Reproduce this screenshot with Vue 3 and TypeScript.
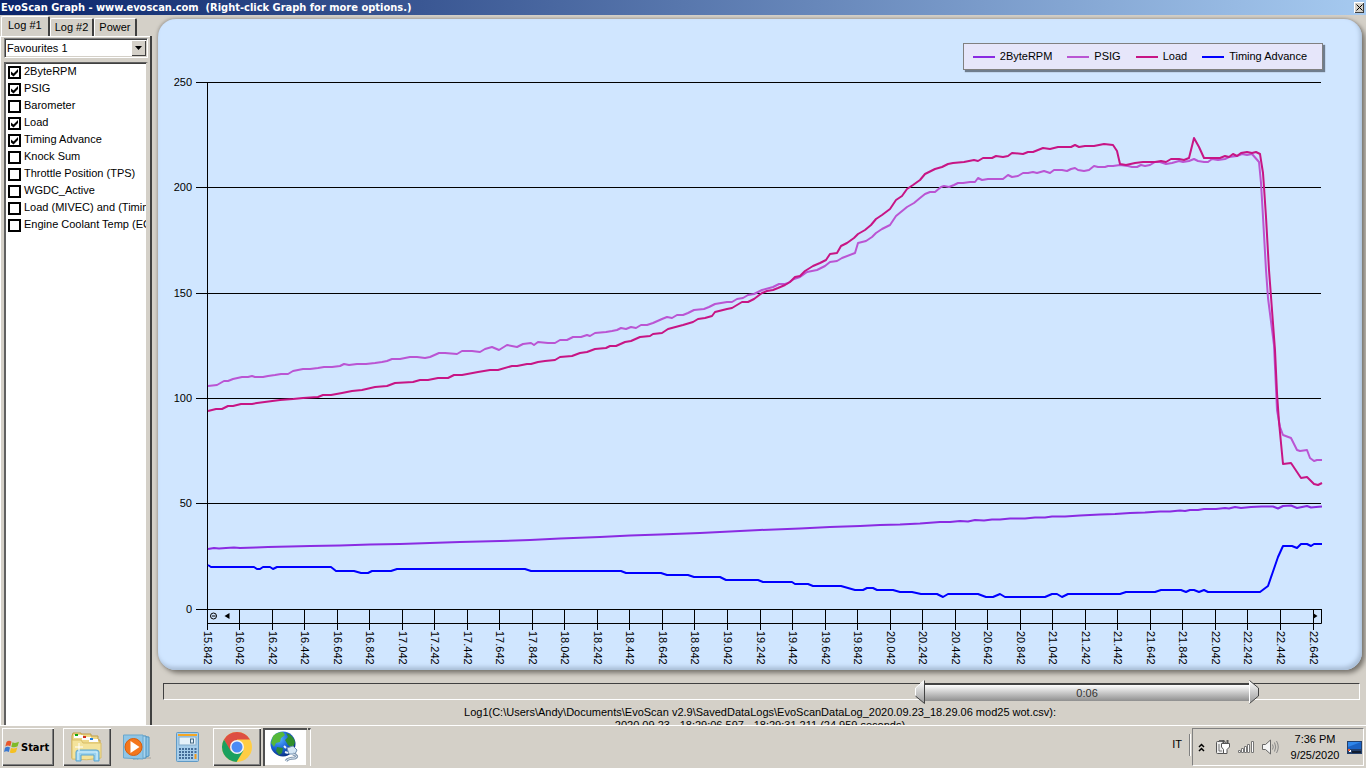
<script setup lang="ts">
import { ref } from 'vue'

interface Channel {
  name: string
  on: boolean
}

interface Series {
  name: string
  color: string
  points: string
}

const tabs = ['Log #1', 'Log #2', 'Power']
const activeTab = ref('Log #1')
const favourite = ref('Favourites 1')
const position = ref(66)

const channels = ref<Channel[]>([
  { name: '2ByteRPM', on: true },
  { name: 'PSIG', on: true },
  { name: 'Barometer', on: false },
  { name: 'Load', on: true },
  { name: 'Timing Advance', on: true },
  { name: 'Knock Sum', on: false },
  { name: 'Throttle Position (TPS)', on: false },
  { name: 'WGDC_Active', on: false },
  { name: 'Load (MIVEC) and (Timing', on: false },
  { name: 'Engine Coolant Temp (EC', on: false },
])

const yTicks = [250, 200, 150, 100, 50, 0].map((value, i) => ({
  value,
  y: Math.floor(82.3 + i * 105.4) + 0.5,
}))

const xTicks = Array.from({ length: 35 }, (_, i) => ({
  label: (15.842 + i * 0.2).toFixed(3),
  x: Math.floor(207 + i * 32.53) + 0.5,
}))

const series: Series[] = [
  {
    name: '2ByteRPM',
    color: '#8a2be2',
    points:
      '208,549 214,548 219,548.5 226,548 234,547.5 240,548 256,547.5 268,547 290,546.5 310,546 340,545.5 370,544.5 400,544 430,543 460,542 500,541 530,540 560,538.5 600,537 630,535.5 660,534.5 700,533 730,531.5 760,530 800,528.5 830,527 860,526 880,525 900,524.5 920,523.5 940,522 950,522 960,521 968,521.5 975,520 984,520.5 992,519.5 1000,519.5 1010,518.5 1025,518.5 1035,517.5 1045,517.5 1052,516.5 1065,516.5 1080,515.5 1100,514.5 1115,514 1130,513 1145,512.5 1160,511.5 1170,511.5 1180,510.5 1185,511 1190,510 1198,510 1204,509 1216,509 1225,508 1229,508.5 1235,507 1241,508 1251,507 1262,506.5 1273,506.5 1278,508.5 1283,506 1291,505.5 1297,508 1307,506 1311,507.5 1316,507 1322,506.5',
  },
  {
    name: 'PSIG',
    color: '#ba55d3',
    points:
      '208,386 217,385 224,381 228,381 233,379 242,377 248,377 252,376 255,377 263,377 268,376 275,375 281,374 288,374 293,371 303,369 310,369 318,368 324,367 332,367 340,366 344,364 349,365 357,364 366,364 375,363 382,362 387,361 392,359 400,359 410,357 417,357 425,358 430,357 439,353 445,353 457,354 462,351 472,351 480,352 485,349 492,347 499,350 507,345 517,347 523,344 531,343 534,345 538,342 548,343 555,343 560,340 567,340 573,337 581,337 587,335 590,336 595,333 606,332 612,331 617,330 621,328 626,329 631,327 636,328 641,325 647,325 653,323 662,319 667,317 672,318 677,315 683,315 688,313 694,310 704,309 709,307 715,304 727,302 732,302 737,299 743,298 748,295 754,294 762,290 773,287 779,284 785,284 788,283 794,279 800,277 807,272 817,270 825,266 830,262 837,261 842,258 855,253 858,243 866,241 872,237 876,233 882,229 890,225 896,216 907,207 914,203 920,198 925,194 930,192 935,192 941,187 944,186 949,187 954,185 958,183 963,183 970,182 975,182 978,178 982,180 988,179 1003,179 1008,175 1012,177 1018,176 1023,173 1028,173 1033,172 1037,173 1044,171 1050,173 1054,170 1062,170 1067,171 1071,169 1075,168 1078,170 1084,171 1089,170 1094,166 1098,167 1105,167 1108,166 1113,166 1120,165 1128,166 1132,167 1137,167 1141,165 1145,166 1150,165 1155,162 1160,162 1166,164 1172,163 1179,161 1183,162 1189,161 1194,159 1198,161 1204,162 1208,162 1212,159 1218,160 1225,159 1229,157 1237,156 1242,154 1247,155 1252,154 1259,162 1261,183 1263,217 1266,270 1268,298 1274,345 1277,410 1280,427 1283,435 1291,438 1297,450 1300,451 1307,450 1310,458 1314,461 1317,460 1322,460',
  },
  {
    name: 'Load',
    color: '#c71585',
    points:
      '208,411 216,409 222,409 228,406 233,406 241,404 252,404 257,403 280,400 293,399 303,398 318,397 323,395 331,395 342,393 352,391 362,390 375,387 387,386 395,383 413,382 420,380 428,380 438,378 448,378 454,375 462,375 478,372 490,370 498,370 512,366 517,366 527,364 531,364 538,362 545,361 555,360 560,357 572,356 580,353 587,352 595,349 606,348 610,346 616,346 625,342 631,341 640,337 650,336 653,334 662,333 668,329 683,325 693,322 698,319 705,318 712,316 715,312 727,309 732,308 742,302 748,302 754,299 762,293 767,291 773,290 778,288 785,285 790,282 795,277 800,276 805,271 813,266 820,263 826,260 830,254 837,253 841,246 847,243 854,238 858,234 865,230 871,225 876,219 882,215 890,209 896,200 902,196 907,189 913,185 920,180 925,174 935,169 942,167 948,164 953,163 964,162 974,160 978,161 983,158 992,158 996,156 1003,157 1008,156 1012,153 1023,154 1028,152 1033,152 1043,148 1050,149 1058,147 1071,147 1075,145 1079,147 1085,146 1094,146 1104,144 1113,145 1117,151 1120,164 1126,165 1135,163 1143,162 1155,162 1161,161 1166,162 1171,159 1179,159 1184,160 1189,158 1194,138 1199,147 1204,158 1220,158 1225,156 1229,157 1233,154 1237,156 1241,153 1247,152 1252,153 1256,152 1260,154 1263,173 1264,187 1266,217 1269,270 1275,350 1277,393 1279,422 1283,464 1291,463 1301,478 1307,477 1314,484 1318,485 1322,483',
  },
  {
    name: 'Timing Advance',
    color: '#0000ff',
    points:
      '208,565 211,567 254,567 257,569 260,569 263,567 270,567 273,569 277,567 331,567 336,571 354,571 361,573 368,573 372,571 391,571 397,569 525,569 531,571 621,571 626,573 661,573 667,575 688,575 694,577 720,577 726,580 758,580 763,582 792,582 795,584 808,584 813,586 841,586 855,590 863,590 867,588 873,588 877,590 893,590 900,592 912,592 921,594 937,594 943,597 948,594 978,594 986,597 993,597 1000,594 1005,597 1045,597 1052,594 1057,594 1062,597 1068,594 1120,594 1126,592 1155,592 1161,590 1181,590 1186,592 1190,590 1194,590 1199,592 1204,590 1208,592 1260,592 1268,586 1278,557 1283,546 1292,546 1297,548 1301,544 1307,544 1311,546 1314,544 1322,544',
  },
]
</script>

<template>
  <div class="screen">
    <header class="titlebar">
      <h1>EvoScan Graph - www.evoscan.com&nbsp; (Right-click Graph for more options.)</h1>
      <button class="close" aria-label="Close">
        <svg viewBox="0 0 7 7" width="7" height="7"><path d="M0.5 0.5L6.5 6.5M6.5 0.5L0.5 6.5" stroke="#000" fill="none" /></svg>
      </button>
    </header>

    <main class="workspace">
      <aside class="sidebar">
        <div class="tabs" role="tablist">
          <button
            v-for="tab in tabs"
            :key="tab"
            role="tab"
            :aria-selected="tab === activeTab"
            :class="['tab', { active: tab === activeTab }]"
            @click="activeTab = tab"
          >{{ tab }}</button>
        </div>
        <div class="tab-page">
          <div class="combo">
            <select v-model="favourite" aria-label="Favourites">
              <option>Favourites 1</option>
            </select>
            <span class="combo-arrow"><svg viewBox="0 0 7 4" width="7" height="4"><path d="M0 0H7L3.5 4Z" /></svg></span>
          </div>
          <div class="channels">
            <label v-for="channel in channels" :key="channel.name" class="channel">
              <input v-model="channel.on" type="checkbox" />
              <svg class="tick" viewBox="0 0 13 13" width="13" height="13">
                <rect x="1" y="1" width="11" height="11" fill="#fff" stroke="#000" stroke-width="2" />
                <path v-if="channel.on" d="M3 5.5V8.5L5.5 10.5L10 6V3L5.5 7.5Z" />
              </svg>
              <span>{{ channel.name }}</span>
            </label>
          </div>
        </div>
      </aside>

      <section class="graph">
        <div class="panel">
          <div class="legend">
            <span v-for="s in series" :key="s.name" class="legend-item">
              <svg viewBox="0 0 22 2" width="22" height="2"><rect width="22" height="2" :fill="s.color" /></svg>
              {{ s.name }}
            </span>
          </div>
          <svg class="chart" viewBox="158 71 1204 598" role="img" aria-label="Log channels over time">
            <g stroke="#000" fill="none">
              <path v-for="t in yTicks" :key="t.value" :d="`M196 ${t.y}H1321`" />
              <path d="M207.5 82V623.5H1321.5V609" />
              <path v-for="t in xTicks" :key="t.label" :d="`M${t.x} 609V630`" />
            </g>
            <g class="axis" text-anchor="end">
              <text v-for="t in yTicks" :key="t.value" x="192" :y="t.y + 3.5">{{ t.value }}</text>
            </g>
            <g class="axis">
              <text v-for="t in xTicks" :key="t.label" :transform="`translate(${t.x - 3.5} 631) rotate(90)`">{{ t.label }}</text>
            </g>
            <circle cx="213.5" cy="616" r="3" fill="none" stroke="#000" />
            <path d="M212 616H215.5" stroke="#000" />
            <path d="M229.500 613V619L224.500 616Z" />
            <path d="M1313 613V619L1317.500 616Z" />
            <polyline
              v-for="s in series"
              :key="s.name"
              :points="s.points"
              :stroke="s.color"
              fill="none"
              stroke-width="2"
              stroke-linejoin="round"
            />
          </svg>
        </div>

        <div class="scroller">
          <div class="track"></div>
          <div class="thumb">
            <svg viewBox="0 0 10 24" width="10" height="24">
              <defs>
                <linearGradient id="metal" x1="0" y1="0" x2="0" y2="1">
                  <stop offset="0" stop-color="#fff" />
                  <stop offset="1" stop-color="#999" />
                </linearGradient>
              </defs>
              <path d="M9.500 0.500L0.500 8V17L9.500 23.500Z" fill="url(#metal)" />
              <path d="M9 0.500L0.500 8V16" fill="none" stroke="#fff" />
              <path d="M0.500 16L9.500 23.500V0.500" fill="none" stroke="#444" />
            </svg>
            <span class="bar">0:06</span>
            <svg viewBox="0 0 10 24" width="10" height="24">
              <path d="M0.500 0.500L9.500 8V16L0.500 23.500Z" fill="url(#metal)" />
              <path d="M0.500 24V0.500" stroke="#fff" />
              <path d="M0.500 0.500L9.500 8V16L0.500 23.500" fill="none" stroke="#444" />
            </svg>
          </div>
          <input v-model="position" class="range" type="range" min="0" max="100" aria-label="Visible time window" />
        </div>

        <p class="caption">
          Log1(C:\Users\Andy\Documents\EvoScan v2.9\SavedDataLogs\EvoScanDataLog_2020.09.23_18.29.06 mod25 wot.csv):<br />
          2020.09.23 - 18:29:06.597 - 18:29:31.211 (24.959 seconds)
        </p>
      </section>
    </main>

    <footer class="taskbar">
      <button class="start raised">
        <svg viewBox="0 0 16 16" width="16" height="16">
          <path d="M2.500 3C4 1.500 6 1.500 7.500 2.800L6.300 7.300C4.800 6.200 3 6.200 1.300 7.500Z" fill="#e8562a" />
          <path d="M8.500 3.300C10.500 4.300 12.500 4 15 2.800L13.600 7.300C11.500 8.500 9.300 8.500 7.300 7.700Z" fill="#7fba28" />
          <path d="M1 8.800C2.800 7.500 4.500 7.500 6 8.500L4.800 13C3.300 12 1.500 12 0 13Z" fill="#3a78d0" />
          <path d="M7 9C9 9.800 11 9.600 13.300 8.500L12 13C9.800 14.500 7.800 14.300 5.800 13.400Z" fill="#f5c021" />
        </svg>
        Start
      </button>
      <nav class="apps" aria-label="Applications">
        <button class="app raised" aria-label="Windows Explorer">
          <svg viewBox="0 0 32 32" width="32" height="32">
            <path d="M1 5V27H29V9H27V5H20V3H10V2H2Z" fill="#eed98a" stroke="#c3a048" />
            <path d="M3 4H12V7H3Z" fill="#fdfdfd" /><path d="M4 3H7V5H4Z" fill="#10a810" />
            <path d="M11 6H20V9H11Z" fill="#fdfdfd" /><path d="M12 5H15V7H12Z" fill="#d03020" />
            <path d="M18 8H27V11H18Z" fill="#fdfdfd" /><path d="M19 7H22V9H19Z" fill="#2080e0" />
            <path d="M1 9H10L12 12H30V27Q16 30 1 28Z" fill="#f4e39b" stroke="#d9bd67" />
            <path d="M5 30V21Q5 19 8 19H25Q28 19 28 21V30H23V24H10V30Z" fill="#9ad2ef" stroke="#5ba5cf" />
            <path d="M7 29V21H26V29" fill="none" stroke="#d9f3fc" />
            <path d="M8 12V20M4 16H12" stroke="#fff" />
          </svg>
        </button>
        <button class="app" aria-label="Media Player">
          <svg viewBox="0 0 32 32" width="32" height="32">
            <path d="M22 26H30V28H22Z" fill="#bdb9b1" />
            <path d="M16 5L28 6V25L16 28Z" fill="#8fc4e4" stroke="#4e93c0" />
            <path d="M12 4.500L25 5V27L12 28Z" fill="#a9d4ee" stroke="#4e93c0" />
            <path d="M2.500 4H22V28L2.500 27Z" fill="#8fc5e6" stroke="#69a7cd" />
            <circle cx="12.500" cy="16" r="8.500" fill="#f4761b" stroke="#d75d0c" />
            <path d="M9.500 10V22L18.500 16Z" fill="#fff" />
          </svg>
        </button>
        <button class="app" aria-label="Calculator">
          <svg viewBox="0 0 32 32" width="32" height="32">
            <rect x="5.500" y="1.500" width="22" height="29" rx="1" fill="#a6cdea" stroke="#5f9ac6" />
            <rect x="7" y="3" width="19" height="2" fill="#f5a623" />
            <rect x="8" y="6" width="17" height="8" fill="#e5f1f9" stroke="#82abc9" />
            <rect x="19.500" y="8" width="3" height="4" fill="none" stroke="#456883" />
            <path d="M8 18H22M8 21H22M8 24H22M8 27H22" stroke="#456d98" stroke-width="2" stroke-dasharray="2 1" />
            <path d="M24.500 17V22" stroke="#456d98" stroke-width="2" stroke-dasharray="2 1" />
            <path d="M24.500 23V28" stroke="#f39a1d" stroke-width="2" />
          </svg>
        </button>
        <button class="app raised" aria-label="Chrome">
          <svg viewBox="0 0 32 32" width="32" height="32">
            <circle cx="16" cy="16" r="15" fill="#ffcd43" />
            <path d="M16 16L9 20L3 8.500A15 15 0 0 1 29 8.500H16Z" fill="#dd4f43" />
            <path d="M3 8.500A15 15 0 0 0 15.500 31L22.500 19.500L16 22L9.500 19.500Z" fill="#1aa05f" />
            <circle cx="16" cy="16" r="7" fill="#f4f4f4" />
            <circle cx="16" cy="16" r="5.500" fill="#4c8bf5" />
          </svg>
        </button>
        <button class="app pressed" aria-label="EvoScan">
          <svg viewBox="0 0 32 32" width="32" height="32">
            <defs>
              <radialGradient id="globe" cx="0.35" cy="0.3" r="0.8">
                <stop offset="0" stop-color="#58b5ff" />
                <stop offset="0.5" stop-color="#1a63d8" />
                <stop offset="1" stop-color="#06246f" />
              </radialGradient>
            </defs>
            <circle cx="14" cy="13" r="12.500" fill="url(#globe)" />
            <path d="M4 5Q8 1 14 1L16 4L12 7L11 11L7 12L5 16L2 12Z" fill="#55b83a" />
            <path d="M17 2Q24 4 26 11L24 17L19 14L16 9L19 6Z" fill="#2f8f2c" />
            <path d="M8 16L14 17L13 22L10 24L7 20Z" fill="#2d8b35" />
            <path d="M18 17L24 15L28 19L26 23L20 23Z" fill="#d5e6f5" stroke="#6f8fb0" />
            <path d="M17 17L15 15M19 22L16 21" stroke="#e8f0f8" stroke-width="2" />
            <path d="M24 23Q30 25 26 27Q19 27 17 30" fill="none" stroke="#8298b0" stroke-width="3" />
            <path d="M24 23Q30 25 26 27Q19 27 17 30" fill="none" stroke="#dbe6f0" />
          </svg>
        </button>
        <span class="group-edge"></span>
      </nav>
      <span class="lang">IT</span>
      <div class="tray">
        <button class="chevrons" aria-label="Show hidden icons">
          <svg viewBox="0 0 7 9" width="7" height="9"><path d="M1 4L3.500 1.500L6 4M1 8L3.500 5.500L6 8" fill="none" stroke="#000" stroke-width="1.500" /></svg>
        </button>
        <svg viewBox="0 0 16 16" width="16" height="16">
          <rect x="1.500" y="2.500" width="9" height="12" rx="1" fill="#eee" stroke="#555" />
          <path d="M4 1H8V3H4Z" fill="#666" />
          <path d="M4 5V12H7" fill="none" stroke="#777" />
          <path d="M8.500 1V4M12.500 1V4" stroke="#555" stroke-width="2" />
          <path d="M6.500 4.500H14.500V8L12 10.500V14.500H8.500V10.500L6.500 8Z" fill="#fff" stroke="#555" />
        </svg>
        <svg viewBox="0 0 17 16" width="17" height="16" fill="#fff" stroke="#777">
          <path d="M0.500 11.500H2.500V13.500H0.500ZM3.500 9.500H5.500V13.500H3.500ZM6.500 7.500H8.500V13.500H6.500ZM9.500 5.500H11.500V13.500H9.500ZM13.500 2.500H15.500V13.500H13.500Z" />
        </svg>
        <svg viewBox="0 0 17 16" width="17" height="16">
          <path d="M0.500 5.500H3.500L8.500 1V15L3.500 10.500H0.500Z" fill="#f4f4f4" stroke="#666" />
          <path d="M10.500 5.500Q12 8 10.500 10.500M12.500 3.500Q15 8 12.500 12.500M14.500 2Q18 8 14.500 14" fill="none" stroke="#888" />
        </svg>
        <div class="clock"><span>7:36 PM</span><span>9/25/2020</span></div>
        <svg viewBox="0 0 15 13" width="15" height="13">
          <rect x="0" y="0" width="15" height="13" fill="#23406c" />
          <path d="M1 1H14V8H1Z" fill="#2f86ea" /><path d="M1 6L14 1V8H1Z" fill="#1a62c4" />
          <path d="M2 9H4V11H2Z" fill="#fff" /><path d="M1 8H3V10H1Z" fill="#e8542b" />
          <path d="M5 10H14V12H5Z" fill="#111d30" />
        </svg>
      </div>
    </footer>
  </div>
</template>

<style>
body {
  margin: 0;
  overflow: hidden;
}
</style>

<style scoped>
* {
  box-sizing: border-box;
}
.screen {
  display: flex;
  flex-direction: column;
  height: 100vh;
  background: #d4d0c8;
  color: #000;
  font: 11px/13px "Liberation Sans", Arial, sans-serif;
}
button,
select {
  font: inherit;
  color: inherit;
  margin: 0;
  padding: 0;
  border: 0;
  border-radius: 0;
  background: #d4d0c8;
}
svg {
  display: block;
  flex: none;
}
.titlebar {
  display: flex;
  align-items: center;
  justify-content: space-between;
  flex: none;
  height: 15px;
  padding: 0 2px 0 1px;
  background: linear-gradient(90deg, #0a246a, #a6caf0);
}
h1 {
  margin: 0;
  color: #fff;
  font: bold 11px/15px "DejaVu Sans Condensed", "DejaVu Sans", sans-serif;
  white-space: nowrap;
}
.close {
  display: grid;
  place-items: center;
  width: 10px;
  height: 11px;
  box-shadow: inset 1px 1px #fff, inset -1px -1px #404040;
}
.workspace {
  display: flex;
  flex: 1;
  min-height: 0;
}
.sidebar {
  display: flex;
  flex-direction: column;
  flex: none;
  width: 152px;
  padding-top: 1px;
}
.tabs {
  display: flex;
  align-items: flex-end;
  flex: none;
  height: 20px;
  padding-left: 1px;
}
.tab {
  height: 18px;
  padding: 0 4px;
  border: solid;
  border-width: 1px 2px 0 1px;
  border-color: #fff #404040 #fff #fff;
  border-radius: 2px 2px 0 0;
}
.tab.active {
  height: 20px;
  padding: 0 6px 2px;
}
.tab-page {
  display: flex;
  flex-direction: column;
  flex: 1;
  min-height: 0;
  gap: 4px;
  padding: 2px 2px 0 3px;
  border: solid;
  border-width: 0 2px 0 1px;
  border-color: #fff #404040 #fff #fff;
  box-shadow: inset 0 1px #fff;
}
.combo {
  position: relative;
  flex: none;
  height: 20px;
  background: #fff;
  border: 1px solid;
  border-color: #808080 #fff #fff #808080;
  box-shadow: inset 1px 1px #404040, inset -1px -1px #d4d0c8;
}
.combo select {
  display: block;
  width: 100%;
  height: 100%;
  padding-left: 2px;
  appearance: none;
  background: transparent;
}
.combo-arrow {
  position: absolute;
  top: 1px;
  right: 1px;
  display: grid;
  place-items: center;
  width: 15px;
  height: 16px;
  background: #d4d0c8;
  box-shadow: inset 1px 1px #fff, inset -1px -1px #404040;
  pointer-events: none;
}
.channels {
  flex: 1;
  min-height: 0;
  overflow: hidden;
  background: #fff;
  border: solid;
  border-width: 1px 2px 0 2px;
  border-color: #606060 #d4d0c8 #fff #606060;
  box-shadow: inset 0 1px #404040;
}
.channel {
  display: flex;
  align-items: center;
  gap: 3px;
  height: 17px;
  padding-left: 2px;
  white-space: nowrap;
}
.channel input {
  position: absolute;
  opacity: 0;
  width: 13px;
  height: 13px;
  margin: 0;
}
.tick {
  margin-top: 2px;
}
.graph {
  display: flex;
  flex-direction: column;
  flex: 1;
  min-width: 0;
  padding: 4px 4px 0 6px;
}
.panel {
  display: flex;
  flex-direction: column;
  flex: 1;
  min-height: 0;
  padding-top: 24px;
  border-radius: 18px;
  background: #d0e6ff;
  box-shadow: 3px 3px 5px #77736c, -1px -1px 3px #aaa69f, inset -2px -3px 4px #a9bdd6;
}
.legend {
  display: flex;
  align-items: center;
  align-self: flex-end;
  gap: 15px;
  height: 27px;
  margin-right: 39px;
  padding: 0 15px 0 9px;
  background: #e6e6fa;
  border: 1px solid #808080;
  box-shadow: 2px 2px 1px #6f7d8d;
}
.legend-item {
  display: flex;
  align-items: center;
  gap: 5px;
}
.chart {
  flex: 1;
  width: 100%;
  min-height: 0;
}
.axis {
  font-size: 11px;
}
.scroller {
  position: relative;
  flex: none;
  height: 24px;
  margin: 10px 2px 0 5px;
  padding-top: 3px;
}
.track {
  height: 17px;
  border: 1px solid;
  border-color: #404040 #fff #fff #404040;
}
.thumb {
  position: absolute;
  top: 0;
  left: 62.8%;
  display: flex;
  align-items: center;
  width: 28.8%;
}
.bar {
  flex: 1;
  height: 17px;
  border-top: 1px solid #444;
  background: linear-gradient(#fff, #8f8f8f);
  color: #333;
  line-height: 16px;
  text-align: center;
}
.range {
  position: absolute;
  inset: 0;
  width: 100%;
  height: 100%;
  margin: 0;
  opacity: 0;
}
.caption {
  flex: none;
  height: 21px;
  margin: 0;
  padding-top: 2px;
  overflow: hidden;
  text-align: center;
  white-space: nowrap;
}
.taskbar {
  display: flex;
  align-items: flex-start;
  flex: none;
  height: 43px;
  padding: 2px 2px 0;
  border-top: 1px solid #fff;
}
.raised {
  box-shadow: inset 1px 1px #fff, inset -1px -1px #404040, inset -2px -2px #808080;
}
.start {
  display: flex;
  align-items: center;
  gap: 1px;
  width: 52px;
  height: 38px;
  padding-left: 2px;
  font: bold 11px/13px "DejaVu Sans Condensed", "DejaVu Sans", sans-serif;
}
.apps {
  display: flex;
  flex: 1;
  gap: 2px;
  padding-left: 9px;
}
.app {
  display: grid;
  place-items: center;
  width: 48px;
  height: 38px;
}
.app.pressed {
  width: 44px;
  background: #fff;
  box-shadow: inset 2px 2px #505050, inset -1px -1px #d4d0c8;
}
.group-edge {
  width: 3px;
  height: 38px;
  margin-left: -1px;
  border-top: 2px solid #505050;
  border-right: 1px solid #fff;
}
.lang {
  height: 22px;
  margin: 6px 2px 0 0;
  padding: 4px 7px 0 0;
  border-right: 1px solid #808080;
  box-shadow: 1px 0 #fff;
}
.tray {
  display: flex;
  align-items: center;
  gap: 7px;
  height: 38px;
  padding: 0 1px 0 5px;
  border: 1px solid;
  border-color: #808080 #fff #fff #808080;
}
.chevrons {
  margin-right: 3px;
}
.clock {
  display: flex;
  flex-direction: column;
  align-items: center;
  gap: 3px;
  width: 50px;
  margin-left: 4px;
}
</style>
